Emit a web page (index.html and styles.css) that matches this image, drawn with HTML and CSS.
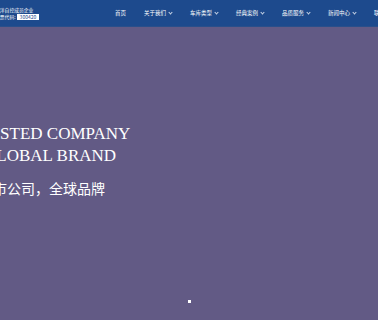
FILE: index.html
```html
<!DOCTYPE html>
<html lang="zh-cn">
<head>
  <meta charset="UTF-8">
  <meta name="viewport" content="width=device-width, initial-scale=1.0">
  <title>上市公司，全球品牌</title>
  <link rel="stylesheet" href="styles.css">
</head>
<body>
  <header class="topbar">
    <div class="brand">
      <p class="brand-line">五洋自控成员企业</p>
      <p class="brand-line">股票代码: <span class="code">300420</span></p>
    </div>
    <nav class="nav">
      <a class="nav-item">首页</a>
      <a class="nav-item">关于我们 <i class="chev"></i></a>
      <a class="nav-item">车库类型 <i class="chev"></i></a>
      <a class="nav-item">经典案例 <i class="chev"></i></a>
      <a class="nav-item">品质服务 <i class="chev"></i></a>
      <a class="nav-item">新闻中心 <i class="chev"></i></a>
      <a class="nav-item">联系我们</a>
    </nav>
  </header>

  <section class="banner">
    <div class="slogan">
      <h1 class="en">LISTED COMPANY<br>GLOBAL BRAND</h1>
      <h2 class="cn">上市公司，全球品牌</h2>
    </div>
    <div class="dots"><span class="dot active"></span></div>
  </section>
</body>
</html>
```

FILE: styles.css
```css
html, body {
  margin: 0;
  height: 100%;
  overflow: hidden;
  background-color: #625a85;
  font-family: "Noto Sans CJK SC", "Noto Sans", sans-serif;
}

.topbar {
  display: flex;
  align-items: center;
  height: 26px;
  background-color: #1d4a8d;
  border-bottom: 1px solid #2a4f8a;
  color: #fff;
  white-space: nowrap;
}

.brand {
  flex: none;
  margin-left: -5px;
  width: 120px;
}

.brand-line {
  margin: 0;
  font-size: 4.8px;
  line-height: 7px;
}

.code {
  display: inline-block;
  background-color: #fff;
  color: #1d4a8d;
  padding: 0 3px;
  line-height: 6px;
  font-size: 5px;
}

.nav {
  flex: none;
  display: flex;
  gap: 18px;
}

.nav-item {
  display: flex;
  align-items: center;
  gap: 3px;
  font-size: 5.5px;
  color: #fff;
}

.chev {
  width: 2px;
  height: 2px;
  border-right: 0.7px solid #c9d4e6;
  border-bottom: 0.7px solid #c9d4e6;
  transform: rotate(45deg);
  margin-top: -2px;
}

.banner {
  position: relative;
  height: 293px;
}

.slogan {
  padding-top: 96px;
  margin-left: -16px;
  color: #fff;
}

.en {
  margin: 0;
  font-family: "Liberation Serif", serif;
  font-weight: normal;
  font-size: 17px;
  line-height: 22px;
}

.cn {
  margin: 11px 0 0 -5px;
  font-weight: normal;
  font-size: 14px;
  line-height: 20px;
}

.dots {
  position: absolute;
  left: 0;
  right: 0;
  bottom: 17px;
  display: flex;
  justify-content: center;
}

.dot {
  width: 3px;
  height: 3px;
  background-color: #fff;
}
```
